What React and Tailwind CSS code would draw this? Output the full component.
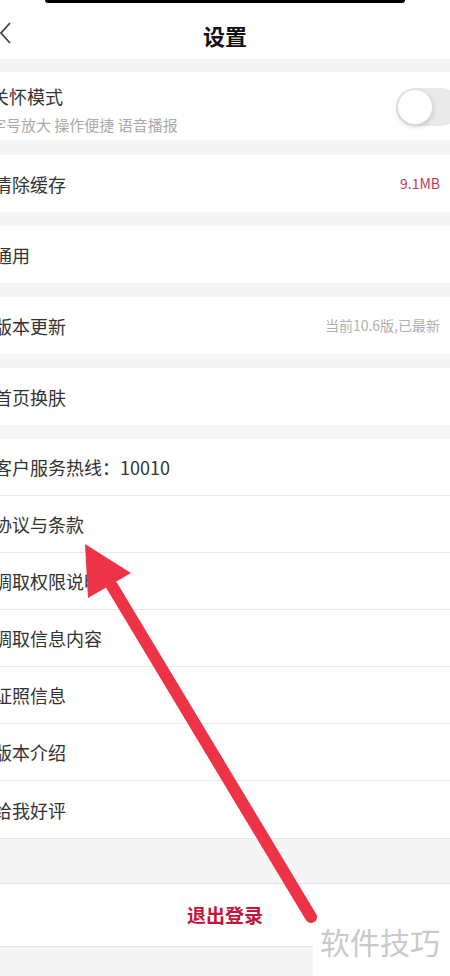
import React from 'react';

const FONT = { fontFamily: '"Noto Sans CJK SC", "Noto Sans", sans-serif' };

function Gap({ h = 'h-[15px]' }) {
  return <div className={`${h} bg-[#f5f5f5]`} />;
}

function Row({ title, right, divider }) {
  return (
    <div className={`h-[57px] flex items-center justify-between pr-[10px] bg-white ${divider ? 'border-b border-[#e8e8e8]' : ''}`}>
      <span className="ml-[-6px] text-[18px] leading-[24px] text-[#333]">{title}</span>
      {right}
    </div>
  );
}

export default function App() {
  const list = ['协议与条款', '调取权限说明', '调取信息内容', '证照信息', '版本介绍', '给我好评'];

  return (
    <div className="relative w-[450px] h-[976px] overflow-hidden bg-[#f5f5f5]" style={FONT}>
      {/* header */}
      <div className="bg-white">
        <div className="flex justify-center">
          <div className="w-[360px] h-[3px] bg-black rounded-b-full" />
        </div>
        <div className="relative h-[56px] pt-[8px] flex items-center justify-center">
          <svg className="absolute left-0 top-[18px]" width="12" height="24" viewBox="0 0 12 24">
            <polyline points="10,2 1,12 10,22" fill="none" stroke="#444" strokeWidth="1.8" />
          </svg>
          <span className="text-[22px] font-bold text-[#111]">设置</span>
        </div>
      </div>

      <Gap h="h-[13px]" />

      {/* 关怀模式 */}
      <div className="h-[68px] bg-white flex items-start justify-between pr-[10px] pt-[12px]">
        <div className="ml-[-9px] flex flex-col gap-[6px]">
          <span className="text-[18px] leading-[24px] text-[#333]">关怀模式</span>
          <span className="text-[15px] leading-[22px] text-[#aaa]">字号放大 操作便捷 语音播报</span>
        </div>
        <div className="mt-[4px] mr-[-20px] w-[64px] h-[38px] rounded-full bg-[#e9e9e9] p-[1px]">
          <div className="w-[36px] h-[36px] rounded-full bg-white border border-[#ddd] shadow-[0_2px_4px_rgba(0,0,0,0.15)]" />
        </div>
      </div>

      <Gap />
      <Row title="清除缓存" right={<span className="text-[14px] text-[#c2385c]">9.1MB</span>} />
      <Gap h="h-[14px]" />
      <Row title="通用" />
      <Gap h="h-[14px]" />
      <Row title="版本更新" right={<span className="text-[14px] text-[#b0b0b0]">当前10.6版,已最新</span>} />
      <Gap h="h-[14px]" />
      <Row title="首页换肤" />
      <Gap h="h-[14px]" />

      <Row title="客户服务热线：10010" divider />
      {list.map((t, i) => (
        <Row key={t} title={t} divider={i < list.length - 1} />
      ))}

      <div className="h-[45px] bg-[#f5f5f5] border-t border-[#e8e8e8]" />
      <div className="h-[64px] bg-white border-y border-[#e3e3e3] flex items-center justify-center">
        <span className="text-[19px] font-bold text-[#c4163c]">退出登录</span>
      </div>

      {/* annotation arrow */}
      <svg className="absolute left-0 top-0 pointer-events-none" width="450" height="976" viewBox="0 0 450 976">
        <line x1="112" y1="586" x2="311" y2="917" stroke="#ee3347" strokeWidth="12" strokeLinecap="round" />
        <polygon points="85,544 131,573 88,598" fill="#ee3347" />
      </svg>

      {/* watermark */}
      <div className="absolute left-[313px] top-[922px] w-[137px] h-[54px] bg-white flex items-start pl-[7px]">
        <span className="text-[30px] leading-[38px] text-[#c9c9c9]">软件技巧</span>
      </div>
    </div>
  );
}
